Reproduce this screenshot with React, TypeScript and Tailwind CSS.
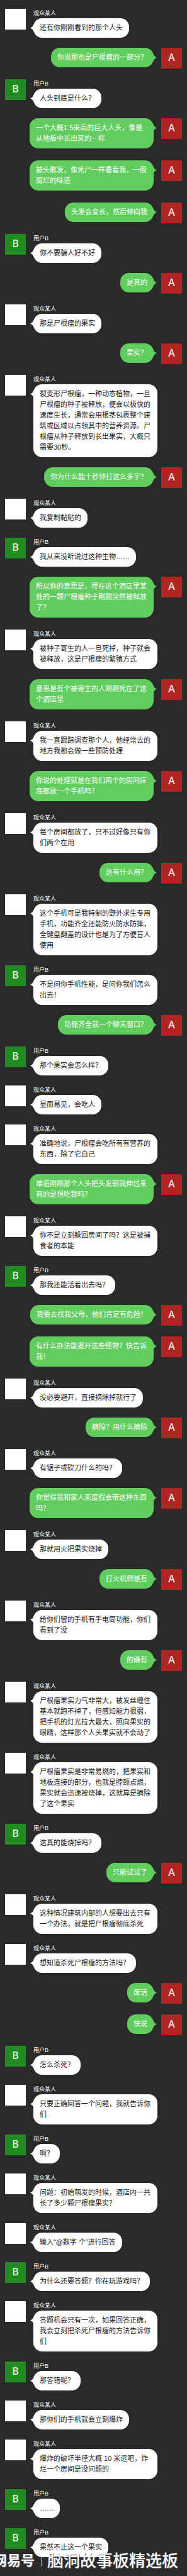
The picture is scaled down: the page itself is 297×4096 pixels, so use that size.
type Sender = 'viewer' | 'A' | 'B';

interface Message {
  from: Sender;
  text: string;
}

const NAMES: Record<Sender, string> = {
  viewer: '观众某人',
  A: '用户A',
  B: '用户B',
};

const MESSAGES: Message[] = [
  { from: 'viewer', text: '还有你刚刚看到的那个人头' },
  { from: 'A', text: '你说那也是尸根瘤的一部分？' },
  { from: 'B', text: '人头到底是什么？' },
  { from: 'A', text: '一个大概1.5米高的巨大人头，像是从地板中长出来的一样' },
  { from: 'A', text: '披头散发，像死尸一样看着我，一股腐烂的味道' },
  { from: 'A', text: '头发会变长，然后伸向我' },
  { from: 'B', text: '你不要骗人好不好' },
  { from: 'A', text: '是真的' },
  { from: 'viewer', text: '那是尸根瘤的果实' },
  { from: 'A', text: '果实？' },
  {
    from: 'viewer',
    text: '裂变形尸根瘤，一种动态植物，一旦尸根瘤的种子被释放，便会以极快的速度生长，通常会用根茎包裹整个建筑或区域以占领其中的营养资源。尸根瘤从种子释放到长出果实，大概只需要30秒。',
  },
  { from: 'A', text: '你为什么能十秒钟打这么多字？' },
  { from: 'viewer', text: '我复制黏贴的' },
  { from: 'B', text: '我从来没听说过这种生物……' },
  { from: 'A', text: '所以你的意思是，埋在这个酒店里某处的一颗尸根瘤种子刚刚突然被释放了？' },
  { from: 'viewer', text: '被种子寄生的人一旦死掉，种子就会被释放，这是尸根瘤的繁殖方式' },
  { from: 'A', text: '意思是有个被寄生的人刚刚死在了这个酒店里' },
  { from: 'viewer', text: '我一直跟踪调查那个人，他经常去的地方我都会做一些预防处理' },
  { from: 'A', text: '你说的处理就是在我们两个的房间床底都放一个手机吗？' },
  { from: 'viewer', text: '每个房间都放了，只不过好像只有你们两个在用' },
  { from: 'A', text: '这有什么用？' },
  {
    from: 'viewer',
    text: '这个手机可是我特制的野外求生专用手机，功能齐全还能防火防水防摔，全键盘翻盖的设计也是为了方便盲人使用',
  },
  { from: 'B', text: '不是问你手机性能，是问你我们怎么出去！' },
  { from: 'A', text: '功能齐全就一个聊天窗口？' },
  { from: 'B', text: '那个果实会怎么样？' },
  { from: 'viewer', text: '显而易见，会吃人' },
  { from: 'viewer', text: '准确地说，尸根瘤会吃所有有营养的东西，除了它自己' },
  { from: 'A', text: '难道刚刚那个人头把头发朝我伸过来真的是想吃我吗？' },
  { from: 'viewer', text: '你不是立刻躲回房间了吗？这是被捕食者的本能' },
  { from: 'B', text: '那我还能活着出去吗？' },
  { from: 'A', text: '我要去找我父母，他们肯定有危险！' },
  { from: 'A', text: '有什么办法能避开这些怪物？快告诉我！' },
  { from: 'viewer', text: '没必要避开，直接摘除掉就行了' },
  { from: 'A', text: '摘除？用什么摘除' },
  { from: 'viewer', text: '有锯子或砍刀什么的吗？' },
  { from: 'A', text: '你觉得我和家人来度假会带这种东西吗？' },
  { from: 'viewer', text: '那就用火把果实烧掉' },
  { from: 'A', text: '打火机倒是有' },
  { from: 'viewer', text: '给你们留的手机有手电筒功能，你们看到了没' },
  { from: 'A', text: '的确有' },
  {
    from: 'viewer',
    text: '尸根瘤果实力气非常大，被发丝缠住基本就跑不掉了，但感知能力很弱，把手机的灯光拉大最大，照向果实的眼睛，这样那个人头果实就不会动了',
  },
  {
    from: 'viewer',
    text: '尸根瘤果实是非常易燃的，把果实和地板连接的部分，也就是脖颈点燃，果实就会迅速被烧掉，这就算是摘除了这个果实',
  },
  { from: 'B', text: '这真的能烧掉吗？' },
  { from: 'A', text: '只能试试了' },
  { from: 'viewer', text: '这种情况建筑内部的人想要出去只有一个办法，就是把尸根瘤彻底杀死' },
  { from: 'viewer', text: '想知道杀死尸根瘤的方法吗？' },
  { from: 'A', text: '废话' },
  { from: 'A', text: '快说' },
  { from: 'B', text: '怎么杀死？' },
  { from: 'viewer', text: '只要正确回答一个问题，我就告诉你们' },
  { from: 'B', text: '啊？' },
  { from: 'viewer', text: '问题：初始萌发的时候，酒店内一共长了多少颗尸根瘤果实？' },
  { from: 'viewer', text: '输入“@数字 个”进行回答' },
  { from: 'B', text: '为什么还要答题？你在玩游戏吗？' },
  { from: 'viewer', text: '答题机会只有一次，如果回答正确，我会立刻把杀死尸根瘤的方法告诉你们' },
  { from: 'B', text: '那答错呢？' },
  { from: 'viewer', text: '那你们的手机就会立刻爆炸' },
  { from: 'viewer', text: '爆炸的破坏半径大概 10 米远吧，炸烂一个房间是没问题的' },
  { from: 'B', text: '……' },
  { from: 'B', text: '果然不止这一个果实' },
];

function Avatar({ from }: { from: Sender }) {
  const color = from === 'viewer' ? 'bg-white' : from === 'A' ? 'bg-[#b02424]' : 'bg-[#228b22]';
  return (
    <div
      className={`flex size-[33px] shrink-0 items-center justify-center pb-1 font-['Noto_Sans',sans-serif] text-[16px] leading-none font-medium text-white/90 ${color}`}
    >
      {from === 'viewer' ? null : from}
    </div>
  );
}

function Tail({ side }: { side: 'left' | 'right' }) {
  return side === 'left' ? (
    <svg className="absolute top-[10px] -left-[5px] h-[11px] w-[7px] text-white" viewBox="0 0 7 11" aria-hidden="true">
      <path d="M0 5.5 Q4 4 5.5 0 H7 V11 H5.5 Q4 7 0 5.5Z" fill="currentColor" />
    </svg>
  ) : (
    <svg className="absolute top-[10px] -right-[5px] h-[11px] w-[7px] text-[#62cd5f]" viewBox="0 0 7 11" aria-hidden="true">
      <path d="M7 5.5 Q3 4 1.5 0 H0 V11 H1.5 Q3 7 7 5.5Z" fill="currentColor" />
    </svg>
  );
}

function Incoming({ message }: { message: Message }) {
  return (
    <li className="flex gap-3 pb-4">
      <Avatar from={message.from} />
      <div className="flex min-w-0 flex-1 flex-col items-start pr-[39px]">
        <span className="h-[15px] text-[9px] leading-[14px] text-white">{NAMES[message.from]}</span>
        <p className="relative rounded-[14px] bg-white px-[10px] py-[7px] text-[11px] leading-[17px] text-[#1a1a1a]">
          <Tail side="left" />
          {message.text}
        </p>
      </div>
    </li>
  );
}

function Outgoing({ message }: { message: Message }) {
  return (
    <li className="flex items-start gap-3 pb-[17px]">
      <div className="flex min-w-0 flex-1 justify-end pl-[39px]">
        <p className="relative mb-[2px] rounded-[14px] bg-[#62cd5f] px-[10px] py-[7px] text-[11px] leading-[17px] text-white">
          <Tail side="right" />
          {message.text}
        </p>
      </div>
      <Avatar from={message.from} />
    </li>
  );
}

export default function App() {
  return (
    <main
      lang="zh-CN"
      className="relative overflow-hidden bg-[#2a2a2a] px-2 py-[14px] font-['Liberation_Sans','Noto_Sans_CJK_SC',sans-serif]"
    >
      <ul>
        {MESSAGES.map((message, i) =>
          message.from === 'A' ? <Outgoing key={i} message={message} /> : <Incoming key={i} message={message} />,
        )}
      </ul>
      <div className="absolute right-[14px] bottom-2 flex items-center text-[26px] leading-8 whitespace-nowrap text-white [text-shadow:1px_1px_1px_#555]">
        <span className="text-[22px] font-bold">网易号</span>
        <span className="mr-2 ml-[11px] h-[18px] w-px bg-white" />
        <span className="font-medium">脑洞故事板精选板</span>
      </div>
    </main>
  );
}
